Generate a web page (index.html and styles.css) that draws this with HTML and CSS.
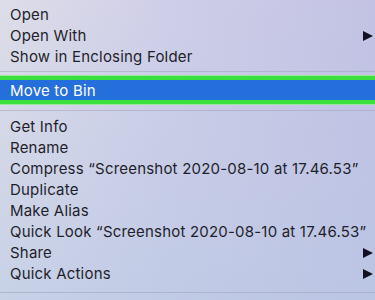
FILE: index.html
```html
<!DOCTYPE html>
<html>
<head>
<meta charset="utf-8">
<link rel="stylesheet" href="styles.css">
</head>
<body>
<div class="menu">
  <div class="group">
    <div class="item">Open</div>
    <div class="item">Open With<span class="arrow"></span></div>
    <div class="item">Show in Enclosing Folder</div>
  </div>
  <div class="sep"></div>
  <div class="hl"><div class="item sel">Move to Bin</div></div>
  <div class="sep sep-mid"></div>
  <div class="group">
    <div class="item">Get Info</div>
    <div class="item">Rename</div>
    <div class="item">Compress “Screenshot 2020-08-10 at 17.46.53”</div>
    <div class="item">Duplicate</div>
    <div class="item">Make Alias</div>
    <div class="item">Quick Look “Screenshot 2020-08-10 at 17.46.53”</div>
    <div class="item">Share<span class="arrow"></span></div>
    <div class="item">Quick Actions<span class="arrow"></span></div>
  </div>
  <div class="sep sep-end"></div>
</div>
</body>
</html>
```
FILE: styles.css
```css
html, body { margin: 0; padding: 0; }
body {
  width: 375px;
  height: 300px;
  overflow: hidden;
  font-family: "Inter", "Liberation Sans", sans-serif;
}
.menu {
  height: 300px;
  padding-top: 4px;
  box-sizing: border-box;
  background:
    linear-gradient(to bottom, rgba(255,255,255,0) 0%, rgba(180,200,228,0.55) 100%),
    linear-gradient(to right, #dedde9 0%, #cfcee8 45%, #c3c2e4 100%);
  color: #1f1f2b;
}
.group { display: flex; flex-direction: column; }
.item {
  height: 21px;
  display: flex;
  align-items: center;
  justify-content: space-between;
  padding: 0 2px 0 10px;
  font-size: 15px;
  letter-spacing: 0.2px;
  white-space: nowrap;
}
.arrow {
  width: 0; height: 0;
  border-top: 5px solid transparent;
  border-bottom: 5px solid transparent;
  border-left: 10px solid #111122;
}
.sep {
  height: 9px;
  display: flex;
  align-items: center;
}
.sep::before {
  content: "";
  flex: 1;
  height: 1px;
  background: rgba(150,150,175,0.45);
}
.sep-mid { height: 12px; }
.sep-end { height: 16px; }
.hl {
  border-top: 4px solid #3be03e;
  border-bottom: 4px solid #3be03e;
  background: #256fdc;
  box-shadow: 0 -1px 0 #9be89c, 0 1px 0 #9be89c;
}
.item.sel {
  height: 20px;
  color: #ffffff;
}
```
